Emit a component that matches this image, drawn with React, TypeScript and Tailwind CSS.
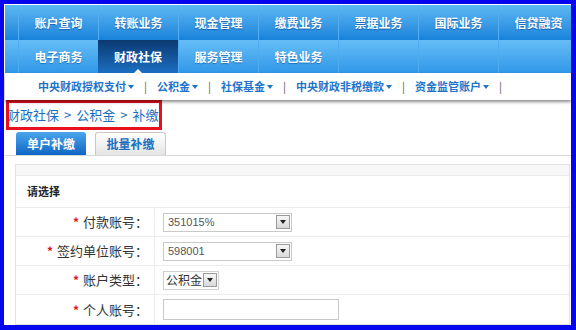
const topItems = ["账户查询", "转账业务", "现金管理", "缴费业务", "票据业务", "国际业务", "信贷融资"];
const secondItems = ["电子商务", "财政社保", "服务管理", "特色业务", "", "", ""];
const subItems = ["中央财政授权支付", "公积金", "社保基金", "中央财政非税缴款", "资金监管账户"];

function DropButton() {
  return (
    <span className="flex h-[14px] w-[14px] shrink-0 items-center justify-center border border-[#9a9a9a] bg-gradient-to-b from-[#f7f7f7] to-[#d9d9d9]">
      <span className="h-0 w-0 border-x-[3px] border-t-[4px] border-x-transparent border-t-[#222]" />
    </span>
  );
}

function Label({ text }: { text: string }) {
  return (
    <div className="flex w-[139px] shrink-0 items-center justify-end border-r border-[#ececec] pr-[6px] text-[13px] text-[#333]">
      <span className="mr-[4px] text-[12px] font-bold text-[#e0102a]">*</span>
      {text}：
    </div>
  );
}

export default function App() {
  return (
    <div className="h-[330px] w-[576px] bg-[#0606ee] pb-[5px] pl-[4px] pr-[5px] pt-[4px]">
      <div
        className="relative h-full w-full overflow-hidden bg-white pl-[1px] pt-[1px]"
        style={{ fontFamily: '"Noto Sans CJK SC", "Liberation Sans", sans-serif' }}
      >
        {/* main nav */}
        <div className="flex h-[35px] bg-gradient-to-b from-[#5cb8f2] to-[#1683dc] pl-[13px]">
          {topItems.map((t) => (
            <div
              key={t}
              className="flex w-[80px] shrink-0 items-center justify-center border-l border-[#54aeee] text-[12px] font-bold text-white [text-shadow:0_1px_1px_rgba(0,60,140,0.6)]"
            >
              {t}
            </div>
          ))}
        </div>
        <div className="flex h-[33px] bg-gradient-to-b from-[#64bdf6] to-[#2f97e8] pl-[13px]">
          {secondItems.map((t, i) =>
            t === "财政社保" ? (
              <div
                key={i}
                className="relative flex w-[80px] shrink-0 items-center justify-center bg-gradient-to-b from-[#0b3a72] to-[#1c6fc2] text-[12px] font-bold text-white"
              >
                {t}
                <span className="absolute bottom-0 left-[36px] h-0 w-0 border-x-[4px] border-b-[4px] border-x-transparent border-b-white" />
              </div>
            ) : (
              <div
                key={i}
                className="flex w-[80px] shrink-0 items-center justify-center border-l border-[#4fadef] text-[12px] font-bold text-white [text-shadow:0_1px_1px_rgba(0,60,140,0.5)]"
              >
                {t}
              </div>
            )
          )}
        </div>

        {/* sub menu */}
        <div className="relative z-10 flex h-[27px] items-center bg-white pl-[33px] text-[11px] font-bold text-[#1f74c9] shadow-[0_2px_3px_rgba(0,0,0,0.45)]">
          {subItems.map((t) => (
            <div key={t} className="flex items-center">
              <span>{t}</span>
              <span className="ml-[2px] h-0 w-0 border-x-[3px] border-t-[4px] border-x-transparent border-t-[#1f74c9]" />
              <span className="px-[10px] font-normal text-[#555]">|</span>
            </div>
          ))}
        </div>

        {/* breadcrumb */}
        <div className="flex h-[30px] items-center pl-[2px] text-[13px] text-[#1a6fc0]">
          财政社保<span className="mx-[5px]">&gt;</span>公积金<span className="mx-[5px]">&gt;</span>补缴
        </div>
        <div className="pointer-events-none absolute left-[2px] top-[96px] h-[30px] w-[156px] border-[3px] border-[#e8101c]" />

        {/* tabs */}
        <div className="mt-[2px] flex h-[24px] items-end gap-[9px] border-b border-[#d8d8d8] pl-[11px]">
          <div className="flex h-[23px] w-[70px] items-center justify-center rounded-t-[3px] bg-gradient-to-b from-[#4aa6ec] to-[#0d66c4] text-[12px] font-bold text-white">
            单户补缴
          </div>
          <div className="flex h-[23px] w-[71px] items-center justify-center rounded-t-[3px] border border-b-0 border-[#c8c8c8] bg-gradient-to-b from-white to-[#e4e4e4] text-[12px] font-bold text-[#1a6fc0]">
            批量补缴
          </div>
        </div>

        {/* form panel */}
        <div className="ml-[10px] mr-[1px] mt-[8px] border border-[#e2e2e2]">
          <div className="h-[11px] border-b border-[#ececec] bg-[#f7f7f7]" />
          <div className="flex h-[32px] items-center border-b border-[#ececec] pl-[11px] text-[11px] font-bold text-[#222]">
            请选择
          </div>
          <div className="flex h-[29px] border-b border-[#ececec]">
            <Label text="付款账号" />
            <div className="flex items-center pl-[8px]">
              <div className="flex h-[19px] w-[129px] items-center justify-between border border-[#c9c9c9] pl-[4px] pr-[1px] text-[11px] text-[#555]" style={{ fontFamily: '"Liberation Sans", sans-serif' }}>
                351015%
                <DropButton />
              </div>
            </div>
          </div>
          <div className="flex h-[29px] border-b border-[#ececec]">
            <Label text="签约单位账号" />
            <div className="flex items-center pl-[8px]">
              <div className="flex h-[19px] w-[129px] items-center justify-between border border-[#c9c9c9] pl-[4px] pr-[1px] text-[11px] text-[#555]" style={{ fontFamily: '"Liberation Sans", sans-serif' }}>
                598001
                <DropButton />
              </div>
            </div>
          </div>
          <div className="flex h-[29px] border-b border-[#ececec]">
            <Label text="账户类型" />
            <div className="flex items-center pl-[8px]">
              <div className="flex h-[19px] w-[56px] items-center justify-between whitespace-nowrap border border-[#d0d0d0] pl-[2px] pr-[1px] text-[12px] text-[#333]">
                公积金
                <DropButton />
              </div>
            </div>
          </div>
          <div className="flex h-[29px]">
            <Label text="个人账号" />
            <div className="flex items-center pl-[8px]">
              <div className="h-[21px] w-[176px] border border-[#c9c9c9]" />
            </div>
          </div>
        </div>
      </div>
    </div>
  );
}
